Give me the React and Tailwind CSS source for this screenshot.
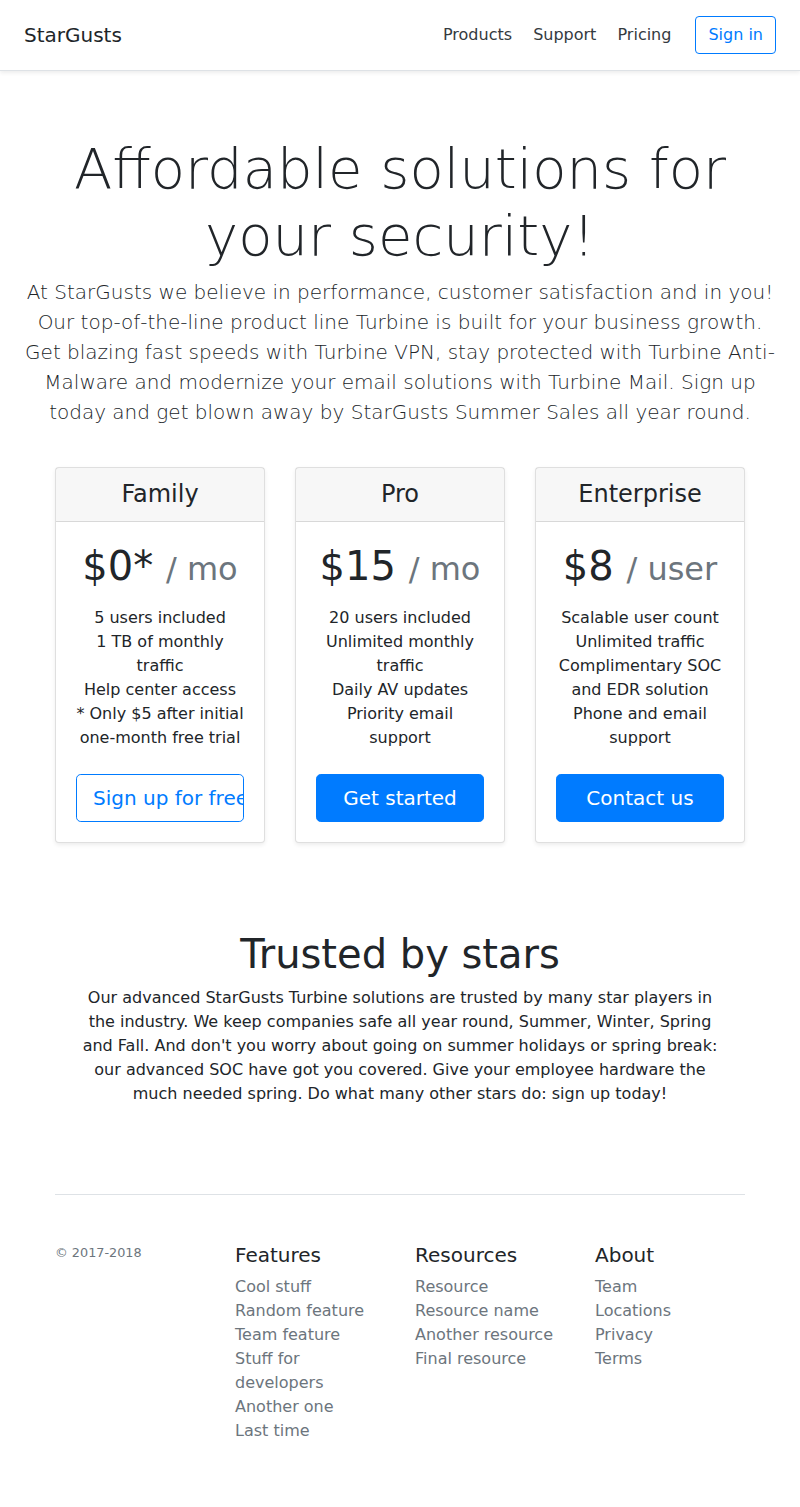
import React from 'react';

const plans = [
  {
    name: 'Family',
    price: '$0*',
    unit: '/ mo',
    features: ['5 users included', '1 TB of monthly traffic', 'Help center access', '* Only $5 after initial one-month free trial'],
    cta: 'Sign up for free',
    outline: true,
  },
  {
    name: 'Pro',
    price: '$15',
    unit: '/ mo',
    features: ['20 users included', 'Unlimited monthly traffic', 'Daily AV updates', 'Priority email support'],
    cta: 'Get started',
  },
  {
    name: 'Enterprise',
    price: '$8',
    unit: '/ user',
    features: ['Scalable user count', 'Unlimited traffic', 'Complimentary SOC and EDR solution', 'Phone and email support'],
    cta: 'Contact us',
  },
];

const footerCols = [
  { title: 'Features', links: ['Cool stuff', 'Random feature', 'Team feature', 'Stuff for developers', 'Another one', 'Last time'] },
  { title: 'Resources', links: ['Resource', 'Resource name', 'Another resource', 'Final resource'] },
  { title: 'About', links: ['Team', 'Locations', 'Privacy', 'Terms'] },
];

const PlanCard = ({ plan }) => (
  <div className="flex flex-col border border-black/[.125] rounded bg-white shadow-[0_0.125rem_0.25rem_rgba(0,0,0,0.075)]">
    {/* Card header */}
    <div className="bg-black/[.03] px-5 py-3 border-b border-black/[.125]">
      <h4 className="text-2xl leading-[1.2] font-normal">{plan.name}</h4>
    </div>
    {/* Card body */}
    <div className="flex-1 flex flex-col p-5">
      <h1 className="text-[40px] leading-[1.2] font-normal">
        {plan.price} <small className="text-[32px] text-[#6c757d]">{plan.unit}</small>
      </h1>
      <ul className="mt-4 mb-6">
        {plan.features.map((f) => (
          <li key={f}>{f}</li>
        ))}
      </ul>
      {plan.outline ? (
        <button className="w-full overflow-hidden whitespace-nowrap text-xl leading-[1.5] py-2 px-4 rounded-[0.3rem] border border-[#007bff] text-[#007bff] bg-white">
          {plan.cta}
        </button>
      ) : (
        <button className="w-full overflow-hidden whitespace-nowrap text-xl leading-[1.5] py-2 px-4 rounded-[0.3rem] border border-[#007bff] text-white bg-[#007bff]">
          {plan.cta}
        </button>
      )}
    </div>
  </div>
);

export default function App() {
  return (
    <div className="min-h-[1507px] bg-white text-[#212529] text-base leading-6 font-['DejaVu_Sans','Liberation_Sans',sans-serif]">
      {/* Top bar */}
      <header className="flex items-center px-6 py-4 mb-4 bg-white border-b border-[#dee2e6] shadow-[0_0.125rem_0.25rem_rgba(0,0,0,0.075)]">
        <h5 className="mr-auto text-xl leading-[1.2] font-normal">StarGusts</h5>
        <nav className="mr-4">
          <a className="p-2 text-[#343a40]" href="#">Products</a>{' '}
          <a className="p-2 text-[#343a40]" href="#">Support</a>{' '}
          <a className="p-2 text-[#343a40]" href="#">Pricing</a>
        </nav>
        <a className="px-3 py-1.5 border border-[#007bff] text-[#007bff] rounded" href="#">Sign in</a>
      </header>

      {/* Hero */}
      <div className="px-5 pt-12 pb-6 text-center">
        <h1 className="text-[56px] leading-[1.2] font-light mb-2">Affordable solutions for your security!</h1>
        <p className="text-xl leading-[1.5] font-light mb-4">
          At StarGusts we believe in performance, customer satisfaction and in you! Our top-of-the-line product line Turbine is built for your business growth. Get blazing fast speeds with Turbine VPN, stay protected with Turbine Anti-Malware and modernize your email solutions with Turbine Mail. Sign up today and get blown away by StarGusts Summer Sales all year round.
        </p>
      </div>

      <div className="w-[690px] mx-auto">
        {/* Pricing cards */}
        <div className="grid grid-cols-3 gap-[30px] mb-6 text-center">
          {plans.map((p) => (
            <PlanCard key={p.name} plan={p} />
          ))}
        </div>

        {/* Trusted section */}
        <div className="pt-[63px] text-center">
          <h1 className="text-[40px] leading-[1.2] font-normal mb-2">Trusted by stars</h1>
          <p className="max-w-[646px] mx-auto">
            Our advanced StarGusts Turbine solutions are trusted by many star players in the industry. We keep companies safe all year round, Summer, Winter, Spring and Fall. And don't you worry about going on summer holidays or spring break: our advanced SOC have got you covered. Give your employee hardware the much needed spring. Do what many other stars do: sign up today!
          </p>
        </div>

        {/* Footer */}
        <footer className="mt-[88px] pt-12 border-t border-[#dee2e6] grid grid-cols-4 gap-[30px]">
          <div>
            <small className="block text-[12.8px] leading-[1.5] text-[#6c757d] mb-4">© 2017-2018</small>
          </div>
          {footerCols.map((col) => (
            <div key={col.title}>
              <h5 className="text-xl leading-[1.2] font-normal mb-2">{col.title}</h5>
              <ul className="mb-4">
                {col.links.map((l) => (
                  <li key={l}>
                    <a className="text-[#6c757d]" href="#">{l}</a>
                  </li>
                ))}
              </ul>
            </div>
          ))}
        </footer>
      </div>
    </div>
  );
}
